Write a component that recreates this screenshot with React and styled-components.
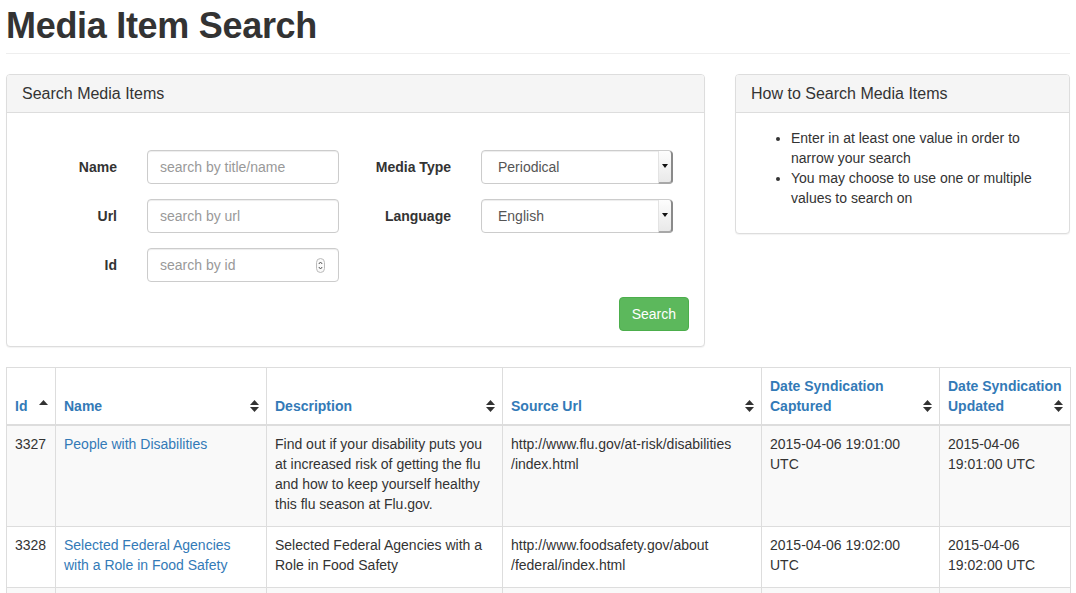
import React from "react";
import styled, { createGlobalStyle } from "styled-components";

const Global = createGlobalStyle`
  html, body { margin: 0; padding: 0; background: #fff; }
  body {
    font-family: "Liberation Sans", Arial, sans-serif;
    font-size: 14px;
    line-height: 20px;
    color: #333;
  }
  * { box-sizing: border-box; }
`;

const Page = styled.div`
  padding: 0 6px;
`;

const Title = styled.h1`
  margin: 6px 0 20px;
  padding-bottom: 7px;
  border-bottom: 1px solid #eee;
  font-size: 36px;
  line-height: 39.6px;
  font-weight: 700;
  color: #333;
  letter-spacing: -0.3px;
`;

const TopRow = styled.div`
  display: flex;
  align-items: flex-start;
  gap: 30px;
  margin-bottom: 20px;
`;

const Panel = styled.section`
  width: ${(p) => p.$w}px;
  border: 1px solid #ddd;
  border-radius: 4px;
  background: #fff;
  box-shadow: 0 1px 1px rgba(0, 0, 0, 0.05);
`;

const PanelHeading = styled.div`
  padding: 10px 15px;
  background: #f5f5f5;
  border-bottom: 1px solid #ddd;
  border-radius: 3px 3px 0 0;
  font-size: 16px;
  line-height: 17.6px;
  color: #333;
  height: 38px;
`;

const PanelBody = styled.div`
  padding: 15px 16px 15px 14px;
`;

const Form = styled.form`
  margin-top: 22px;
  display: grid;
  grid-template-columns: 334px 334px;
  row-gap: 15px;
`;

const Group = styled.div`
  display: grid;
  grid-template-columns: 96px 192px;
  column-gap: 30px;
  align-items: center;
  height: 34px;
`;

const Label = styled.label`
  text-align: right;
  font-weight: 700;
`;

const InputBox = styled.div`
  position: relative;
  height: 34px;
  border: 1px solid #ccc;
  border-radius: 4px;
  box-shadow: inset 0 1px 1px rgba(0, 0, 0, 0.075);
  padding: 6px 12px;
  color: #999;
  background: #fff;
`;

const Spinner = styled.span`
  position: absolute;
  right: 13px;
  top: 9px;
  display: flex;
`;

const SelectBox = styled.div`
  position: relative;
  height: 34px;
  border: 1px solid #ccc;
  border-radius: 4px;
  padding: 6px 16px;
  color: #555;
  background: #fff;
  box-shadow: inset 0 1px 1px rgba(0, 0, 0, 0.075);
`;

const SelectArrow = styled.span`
  position: absolute;
  top: 0;
  right: -1px;
  bottom: -1px;
  width: 15px;
  background: linear-gradient(#fdfdfd, #e9e9e9);
  border-left: 1px solid #e3e3e3;
  border-right: 2px solid #8a8a8a;
  border-bottom: 2px solid #a8a8a8;
  border-radius: 0 4px 4px 0;
  display: flex;
  align-items: center;
  justify-content: center;
`;

const ButtonRow = styled.div`
  grid-column: 1 / span 2;
  display: flex;
  justify-content: flex-end;
`;

const Button = styled.button`
  height: 34px;
  padding: 6px 12px;
  font-family: inherit;
  font-size: 14px;
  line-height: 20px;
  color: #fff;
  background: #5cb85c;
  border: 1px solid #4cae4c;
  border-radius: 4px;
`;

const HelpList = styled.ul`
  margin: 0 0 10px;
  padding-left: 41px;
  li { line-height: 20px; }
`;

const Table = styled.table`
  width: 1064px;
  table-layout: fixed;
  border-collapse: collapse;
  border: 1px solid #ddd;
`;

const Th = styled.th`
  position: relative;
  border: 1px solid #ddd;
  border-bottom: 2px solid #ddd;
  padding: 8px;
  vertical-align: bottom;
  text-align: left;
  font-weight: 700;
  color: #337ab7;
`;

const SortIcon = styled.svg`
  position: absolute;
  right: 7px;
  bottom: 11px;
`;

const Tr = styled.tr`
  background: ${(p) => (p.$striped ? "#f9f9f9" : "#fff")};
`;

const Td = styled.td`
  border: 1px solid #ddd;
  padding: 8px 8px 12px;
  vertical-align: top;
`;

const Link = styled.a`
  color: #337ab7;
  text-decoration: none;
`;

function Sort({ up }) {
  return (
    <SortIcon width="9" height="14" viewBox="0 0 9 14">
      <polygon points="0,6 4.5,1 9,6" fill="#333" />
      {!up && <polygon points="0,8 4.5,13 9,8" fill="#333" />}
    </SortIcon>
  );
}

const cols = [49, 211, 236, 259, 178, 131];
const headers = [
  { t: ["Id"], up: true },
  { t: ["Name"] },
  { t: ["Description"] },
  { t: ["Source Url"] },
  { t: ["Date Syndication", "Captured"] },
  { t: ["Date Syndication", "Updated"] },
];

const rows = [
  {
    id: "3327",
    name: ["People with Disabilities"],
    desc: [
      "Find out if your disability puts you",
      "at increased risk of getting the flu",
      "and how to keep yourself healthy",
      "this flu season at Flu.gov.",
    ],
    url: ["http://www.flu.gov/at-risk/disabilities", "/index.html"],
    cap: ["2015-04-06 19:01:00", "UTC"],
    upd: ["2015-04-06", "19:01:00 UTC"],
  },
  {
    id: "3328",
    name: ["Selected Federal Agencies", "with a Role in Food Safety"],
    desc: ["Selected Federal Agencies with a", "Role in Food Safety"],
    url: ["http://www.foodsafety.gov/about", "/federal/index.html"],
    cap: ["2015-04-06 19:02:00", "UTC"],
    upd: ["2015-04-06", "19:02:00 UTC"],
  },
  {
    id: "3329",
    name: ["Food Safety"],
    desc: ["Food Safety"],
    url: ["http://www.foodsafety.gov/"],
    cap: ["2015-04-06 19:03:00", "UTC"],
    upd: ["2015-04-06", "19:03:00 UTC"],
  },
];

const Lines = ({ l }) =>
  l.map((s, i) => (
    <React.Fragment key={i}>
      {i > 0 && <br />}
      {s}
    </React.Fragment>
  ));

function Arrow() {
  return (
    <svg width="6" height="4" viewBox="0 0 6 4">
      <polygon points="0,0 6,0 3,4" fill="#111" />
    </svg>
  );
}

function SpinIcon() {
  return (
    <svg width="9" height="15" viewBox="0 0 9 15">
      <rect x="0.5" y="0.5" width="8" height="14" rx="4" fill="#fafafa" stroke="#bbb" />
      <polyline points="2.8,6 4.5,4 6.2,6" fill="none" stroke="#555" strokeWidth="1" />
      <polyline points="2.8,9 4.5,11 6.2,9" fill="none" stroke="#555" strokeWidth="1" />
    </svg>
  );
}

export default function App() {
  return (
    <Page>
      <Global />
      <Title>Media Item Search</Title>
      <TopRow>
        <Panel $w={699}>
          <PanelHeading>Search Media Items</PanelHeading>
          <PanelBody>
            <Form>
              <Group>
                <Label>Name</Label>
                <InputBox>search by title/name</InputBox>
              </Group>
              <Group>
                <Label>Media Type</Label>
                <SelectBox>
                  Periodical
                  <SelectArrow>
                    <Arrow />
                  </SelectArrow>
                </SelectBox>
              </Group>
              <Group>
                <Label>Url</Label>
                <InputBox>search by url</InputBox>
              </Group>
              <Group>
                <Label>Language</Label>
                <SelectBox>
                  English
                  <SelectArrow>
                    <Arrow />
                  </SelectArrow>
                </SelectBox>
              </Group>
              <Group>
                <Label>Id</Label>
                <InputBox>
                  search by id
                  <Spinner>
                    <SpinIcon />
                  </Spinner>
                </InputBox>
              </Group>
              <div />
              <ButtonRow>
                <Button type="button">Search</Button>
              </ButtonRow>
            </Form>
          </PanelBody>
        </Panel>
        <Panel $w={335}>
          <PanelHeading>How to Search Media Items</PanelHeading>
          <PanelBody>
            <HelpList>
              <li>Enter in at least one value in order to narrow your search</li>
              <li>You may choose to use one or multiple values to search on</li>
            </HelpList>
          </PanelBody>
        </Panel>
      </TopRow>
      <Table>
        <colgroup>
          {cols.map((w, i) => (
            <col key={i} style={{ width: w }} />
          ))}
        </colgroup>
        <thead>
          <tr>
            {headers.map((h, i) => (
              <Th key={i}>
                <Lines l={h.t} />
                <Sort up={h.up} />
              </Th>
            ))}
          </tr>
        </thead>
        <tbody>
          {rows.map((r, i) => (
            <Tr key={r.id} $striped={i % 2 === 0}>
              <Td>{r.id}</Td>
              <Td>
                <Link href="#">
                  <Lines l={r.name} />
                </Link>
              </Td>
              <Td>
                <Lines l={r.desc} />
              </Td>
              <Td>
                <Lines l={r.url} />
              </Td>
              <Td>
                <Lines l={r.cap} />
              </Td>
              <Td>
                <Lines l={r.upd} />
              </Td>
            </Tr>
          ))}
        </tbody>
      </Table>
    </Page>
  );
}
